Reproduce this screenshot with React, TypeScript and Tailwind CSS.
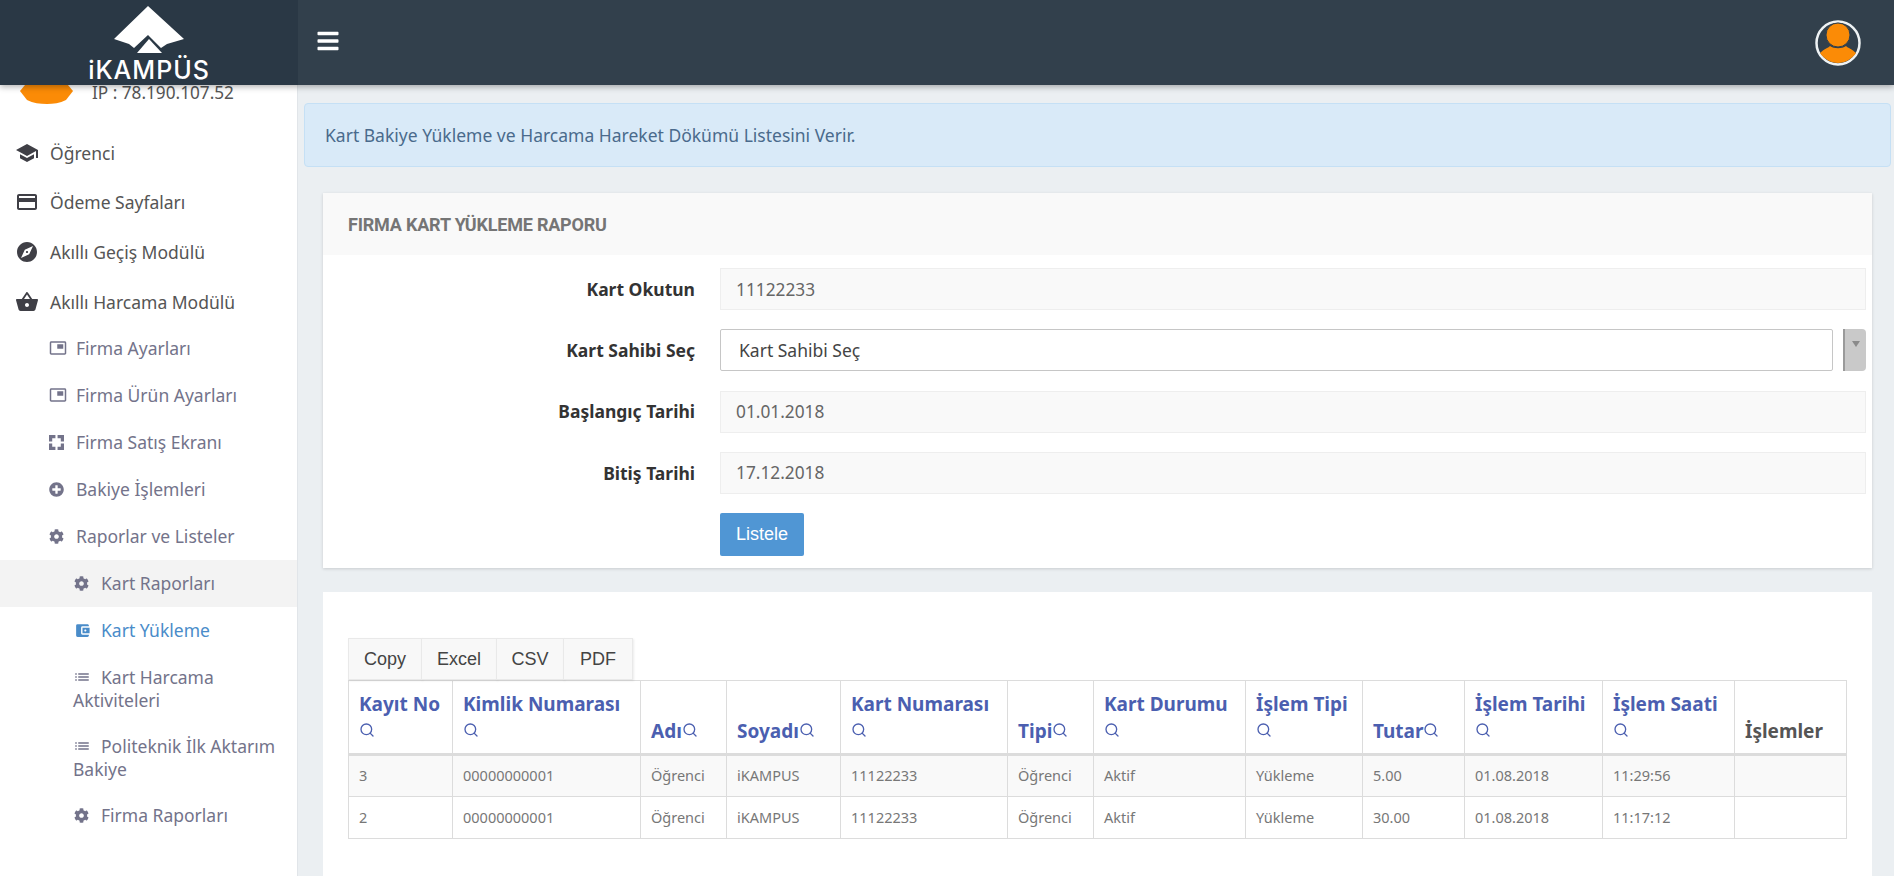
import type { ReactNode } from "react";
import { FaBars, FaCog, FaPlusCircle } from "react-icons/fa";
import { MdAccountBalanceWallet, MdCreditCard, MdExplore, MdList, MdPictureInPicture, MdSchool, MdShoppingBasket } from "react-icons/md";
import { Search } from "lucide-react";

const columns = [
  { title: "Kayıt No", width: "w-[104px]", search: true },
  { title: "Kimlik Numarası", width: "w-[188px]", search: true },
  { title: "Adı", width: "w-[86px]", search: true },
  { title: "Soyadı", width: "w-[114px]", search: true },
  { title: "Kart Numarası", width: "w-[167px]", search: true },
  { title: "Tipi", width: "w-[86px]", search: true },
  { title: "Kart Durumu", width: "w-[152px]", search: true },
  { title: "İşlem Tipi", width: "w-[117px]", search: true },
  { title: "Tutar", width: "w-[102px]", search: true },
  { title: "İşlem Tarihi", width: "w-[138px]", search: true },
  { title: "İşlem Saati", width: "w-[132px]", search: true },
  { title: "İşlemler", width: "w-[112px]", search: false },
];

const rows = [
  ["3", "00000000001", "Öğrenci", "iKAMPUS", "11122233", "Öğrenci", "Aktif", "Yükleme", "5.00", "01.08.2018", "11:29:56", ""],
  ["2", "00000000001", "Öğrenci", "iKAMPUS", "11122233", "Öğrenci", "Aktif", "Yükleme", "30.00", "01.08.2018", "11:17:12", ""],
];

const FocusIcon = () => (
  <svg width="15" height="15" viewBox="0 0 14 14" fill="currentColor">
    <path d="M0 0H6V3H3V6H0Z M8 0H14V6H11V3H8Z M0 8H3V11H6V14H0Z M11 8H14V14H8V11H11Z" />
  </svg>
);

const mainMenu = [
  { label: "Öğrenci", icon: <MdSchool size={24} /> },
  { label: "Ödeme Sayfaları", icon: <MdCreditCard size={24} /> },
  { label: "Akıllı Geçiş Modülü", icon: <MdExplore size={24} /> },
  { label: "Akıllı Harcama Modülü", icon: <MdShoppingBasket size={24} /> },
];

const subMenu = [
  { label: "Firma Ayarları", icon: <MdPictureInPicture size={18} /> },
  { label: "Firma Ürün Ayarları", icon: <MdPictureInPicture size={18} /> },
  { label: "Firma Satış Ekranı", icon: <FocusIcon /> },
  { label: "Bakiye İşlemleri", icon: <FaPlusCircle size={15} /> },
  { label: "Raporlar ve Listeler", icon: <FaCog size={15} /> },
];

const Logo = () => (
  <div className="flex flex-col items-center">
    <svg width="70" height="47" viewBox="0 0 70 47" className="mt-[6px]">
      <path fill="#fff" d="M34 0 L70 33 L53 38 L47 42 L34 29 L20 42 L15 38 L0 33 Z" />
      <path fill="#fff" d="M35 33 L48 47 L23 47 Z" />
    </svg>
    <span className="mt-[5px] font-['Inter',sans-serif] text-[25px] font-medium leading-[24px] tracking-[1px] text-white">iKAMPÜS</span>
  </div>
);

const UserAvatar = () => (
  <svg width="46" height="46" viewBox="0 0 46 46">
    <circle cx="23" cy="23" r="21.5" fill="#32404c" stroke="#eef2f4" strokeWidth="2.5" />
    <path fill="#fb8b06" d="M5 33 C9 29 13 28 15 26 C19 29 27 29 31 26 C33 28 37 29 41 33 C37 39 30 43 23 43 C16 43 9 39 5 33 Z" />
    <circle cx="23" cy="15" r="12" fill="#fb8b06" stroke="#32404c" strokeWidth="1" />
  </svg>
);

const SubItem = ({ icon, children }: { icon: ReactNode; children: ReactNode }) => (
  <div className="flex h-[47px] items-center pl-[49px] text-[17.5px] text-[#73738a]">
    <span className="flex w-[27px] shrink-0 items-center">{icon}</span>
    {children}
  </div>
);

const Sidebar = () => (
  <aside className="w-[298px] shrink-0 overflow-hidden border-r border-[#e1e5e9] bg-white font-['Noto_Sans',sans-serif]">
    <div className="flex h-[43px] items-start pl-[20px]">
      <svg width="53" height="19" viewBox="0 0 53 19">
        <path fill="#fb8b06" d="M0 6 L5 0 H48 L53 6 L46 15 C40 18 33 19 27 19 C20 19 13 18 7 15 Z" />
      </svg>
      <span className="ml-[19px] text-[17.2px] leading-[16px] text-[#555]">IP : 78.190.107.52</span>
    </div>

    {mainMenu.map((item) => (
      <div key={item.label} className="flex h-[49.67px] items-center pl-[15px] text-[17.5px] text-[#555]">
        <span className="flex w-[35px] shrink-0 items-center text-[#3f3f46]">{item.icon}</span>
        {item.label}
      </div>
    ))}

    <div className="-mt-[2px]">
      {subMenu.map((item) => (
        <SubItem key={item.label} icon={item.icon}>{item.label}</SubItem>
      ))}

      {/* third level */}
      <div className="flex h-[47px] items-center bg-[#f3f3f3] pl-[74px] text-[17.5px] text-[#73738a]">
        <span className="flex w-[27px] shrink-0 items-center"><FaCog size={15} /></span>
        Kart Raporları
      </div>
      <div className="flex h-[47px] items-center pl-[74px] text-[17.5px] text-[#4a8cc9]">
        <span className="flex w-[27px] shrink-0 items-center"><MdAccountBalanceWallet size={17} /></span>
        Kart Yükleme
      </div>
      <div className="pb-[11px] pl-[73px] pr-[16px] pt-[12px] text-[17.5px] leading-[23px] text-[#73738a]">
        <MdList size={18} className="mr-[10px] inline-block align-[-2px]" />
        Kart Harcama Aktiviteleri
      </div>
      <div className="pb-[11px] pl-[73px] pr-[16px] pt-[12px] text-[17.5px] leading-[23px] text-[#73738a]">
        <MdList size={18} className="mr-[10px] inline-block align-[-2px]" />
        Politeknik İlk Aktarım Bakiye
      </div>
      <div className="flex h-[47px] items-center pl-[74px] text-[17.5px] text-[#73738a]">
        <span className="flex w-[27px] shrink-0 items-center"><FaCog size={15} /></span>
        Firma Raporları
      </div>
    </div>
  </aside>
);

const FormRow = ({ label, children }: { label: string; children: ReactNode }) => (
  <div className="flex items-center">
    <label className="w-[397px] shrink-0 pr-[25px] text-right text-[17.5px] font-bold text-[#333]">{label}</label>
    {children}
  </div>
);

const ReadInput = ({ value }: { value: string }) => (
  <input
    readOnly
    value={value}
    className="h-[42px] flex-1 border border-[#eeeeee] bg-[#f9f9f9] px-[15px] text-[17.3px] text-[#666]"
  />
);

const ReportCard = () => (
  <section className="ml-[25px] mr-[22px] bg-white shadow-[0_1px_3px_rgba(0,0,0,0.15)]">
    <div className="flex h-[62px] items-center bg-[#f9f9f9] pl-[25px] font-['Roboto',sans-serif] text-[18px] font-bold tracking-[-0.2px] text-[#757575]">
      FIRMA KART YÜKLEME RAPORU
    </div>
    <div className="flex flex-col gap-[19.25px] pb-[12px] pr-[6px] pt-[13px] font-['Noto_Sans',sans-serif]">
      <FormRow label="Kart Okutun"><ReadInput value="11122233" /></FormRow>
      <FormRow label="Kart Sahibi Seç">
        <div className="flex h-[42px] flex-1 items-center justify-between">
          <div className="flex h-full w-[1113px] items-center rounded-[2px] border border-[#c6c6c6] bg-white pl-[18px] text-[17.5px] text-[#444]">
            Kart Sahibi Seç
          </div>
          <div className="flex h-full w-[23px] justify-center rounded-r-[4px] border-l-2 border-[#9a9a9a] bg-[#c9c9c9] pt-[12px]">
            <span className="h-0 w-0 border-x-[4px] border-t-[6px] border-x-transparent border-t-[#8a8a8a]" />
          </div>
        </div>
      </FormRow>
      <FormRow label="Başlangıç Tarihi"><ReadInput value="01.01.2018" /></FormRow>
      <FormRow label="Bitiş Tarihi"><ReadInput value="17.12.2018" /></FormRow>
      <div className="pl-[397px]">
        <button className="h-[43px] w-[84px] rounded-[2px] bg-[#5096d4] font-['Liberation_Sans',sans-serif] text-[18px] text-white">
          Listele
        </button>
      </div>
    </div>
  </section>
);

const ExportButtons = () => (
  <div className="flex h-[42px] w-fit font-['Liberation_Sans',sans-serif] text-[18px] text-[#444]">
    {["Copy", "Excel", "CSV", "PDF"].map((name, i) => (
      <div
        key={name}
        className={`flex items-center justify-center border border-[#e9e9e9] bg-[#f8f8f8] shadow-[1px_1px_2px_rgba(0,0,0,0.08)] ${i > 0 ? "-ml-px" : ""} ${
          ["w-[74px]", "w-[76px]", "w-[68px]", "w-[70px]"][i]
        }`}
      >
        {name}
      </div>
    ))}
  </div>
);

const DataTable = () => (
  <table className="w-[1498px] table-fixed border-collapse font-['Noto_Sans',sans-serif]">
    <thead>
      <tr>
        {columns.map((col) => (
          <th
            key={col.title}
            className={`${col.width} border border-b-[3px] border-[#dcdcdc] px-[10px] pb-[8px] pt-[10px] text-left align-bottom text-[19px] font-bold leading-[27px] ${
              col.search ? "text-[#4b5fb0]" : "text-[#555]"
            }`}
          >
            {col.title}
            {col.search && <Search size={16} strokeWidth={2} className="inline-block align-[0px]" />}
          </th>
        ))}
      </tr>
    </thead>
    <tbody>
      {rows.map((row, r) => (
        <tr key={r} className={r === 0 ? "bg-[#f9f9f9]" : "bg-white"}>
          {row.map((cell, c) => (
            <td key={c} className="h-[42px] border border-[#dcdcdc] px-[10px] text-[14.5px] text-[#777]">
              {cell}
            </td>
          ))}
        </tr>
      ))}
    </tbody>
  </table>
);

export default function App() {
  return (
    <div className="flex h-[876px] flex-col overflow-hidden bg-[#ebeff2]">
      {/* Top bar */}
      <header className="relative z-10 flex h-[85px] shrink-0 bg-[#32404c] shadow-[0_2px_6px_rgba(0,0,0,0.3)]">
        <div className="flex h-[85px] w-[298px] shrink-0 justify-center bg-[#2a3845]">
          <Logo />
        </div>
        <div className="flex flex-1 items-center justify-between pl-[18px] pr-[33px]">
          <FaBars size={24} className="mb-[3px] text-white" />
          <UserAvatar />
        </div>
      </header>

      <div className="flex min-h-0 flex-1">
        <Sidebar />

        <main className="min-w-0 flex-1 overflow-hidden">
          <div className="ml-[6px] mr-[3px] mt-[18px] flex h-[64px] items-center rounded-[4px] border border-[#c5e0f5] bg-[#d9eaf8] pl-[20px] font-['Noto_Sans',sans-serif] text-[17.5px] text-[#4a6a8c]">
            Kart Bakiye Yükleme ve Harcama Hareket Dökümü Listesini Verir.
          </div>

          <div className="mt-[26px]">
            <ReportCard />
          </div>

          <section className="ml-[25px] mr-[22px] mt-[24px] h-[400px] bg-white px-[25px] pt-[46px]">
            <ExportButtons />
            <DataTable />
          </section>
        </main>
      </div>
    </div>
  );
}
